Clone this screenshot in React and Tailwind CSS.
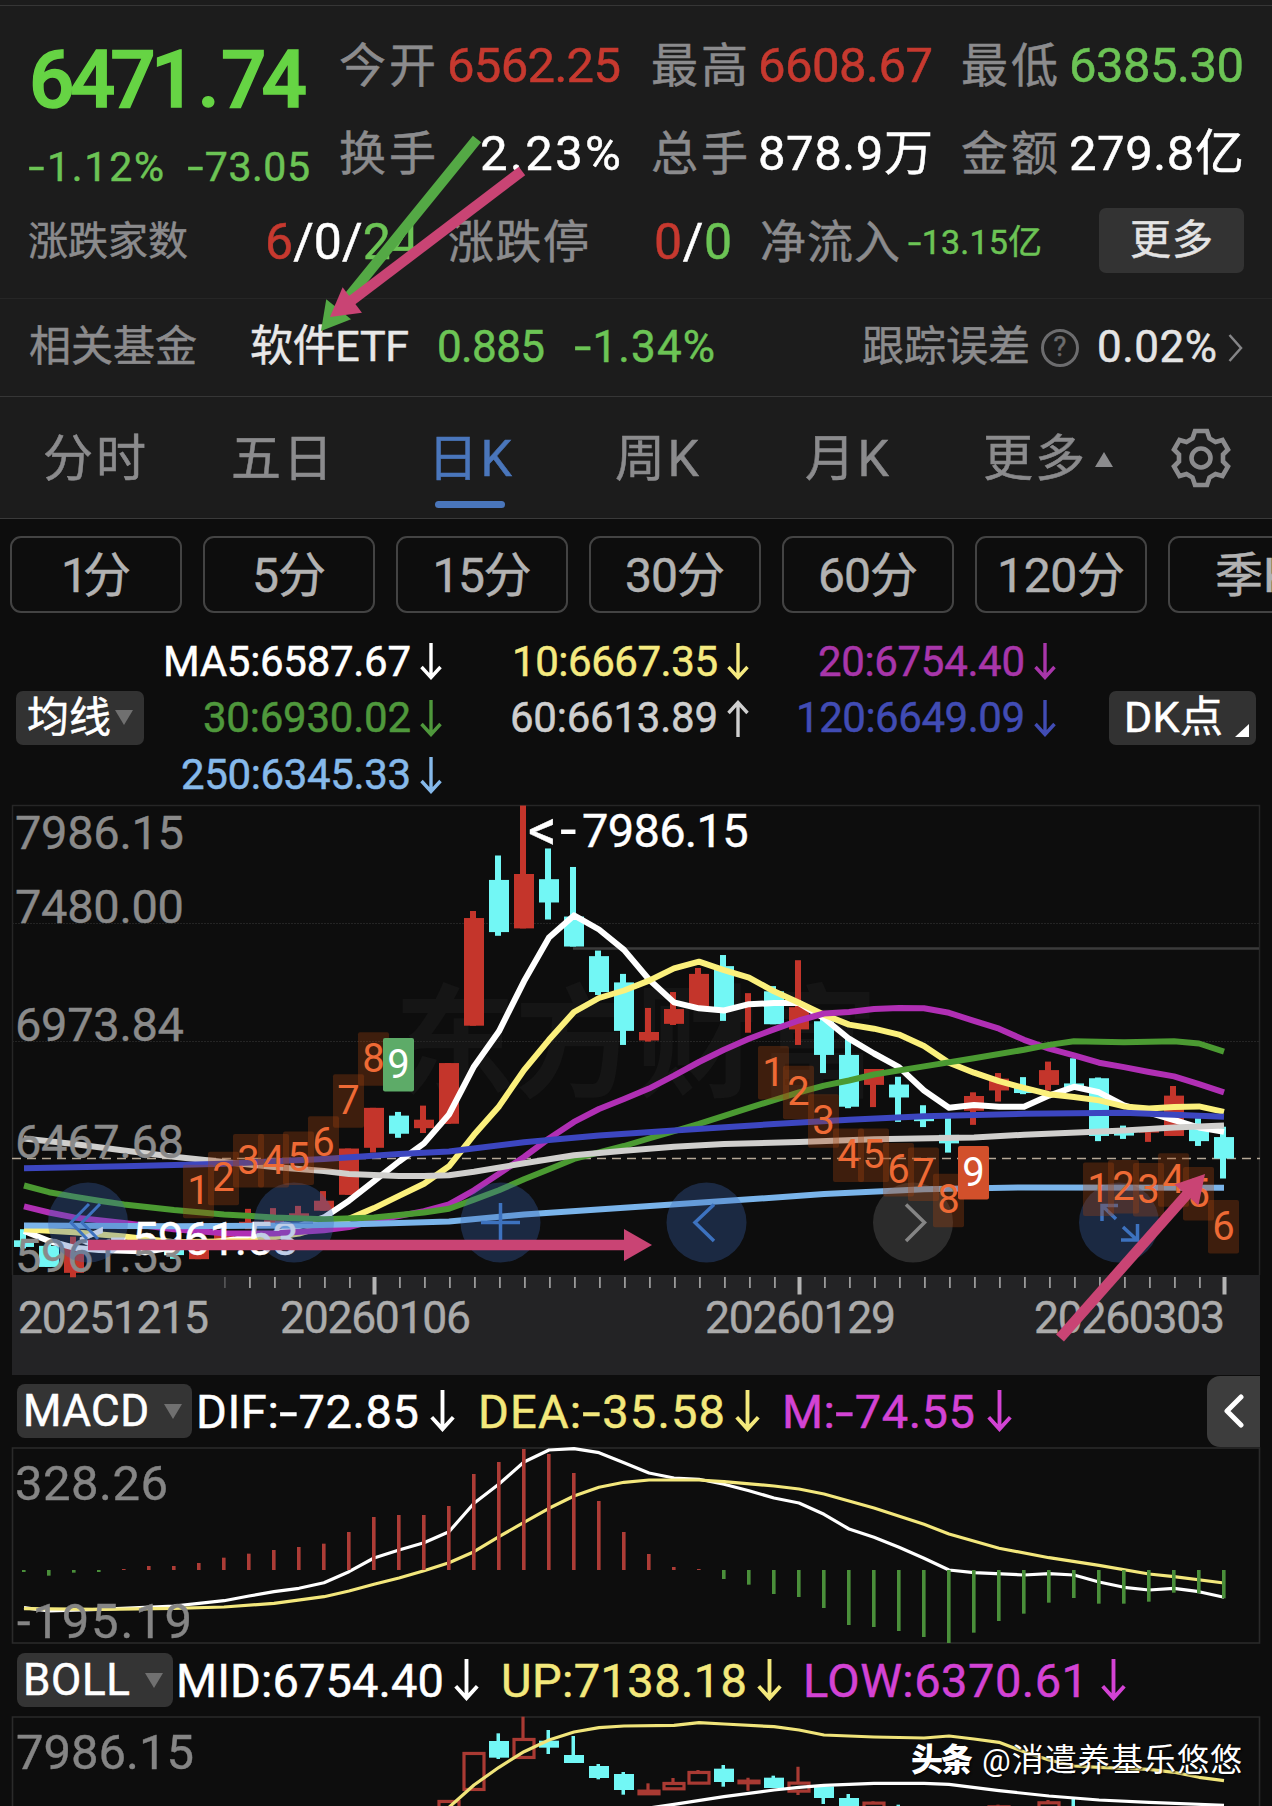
import React, { useLayoutEffect, useRef } from "react";

const FONT = "font-['Roboto','Noto_Sans_CJK_SC',sans-serif]";

// Spreads a single line of text evenly over the width of its box.
function Fit({ children, className = "" }) {
  const box = useRef(null);
  const inner = useRef(null);
  useLayoutEffect(() => {
    const el = inner.current;
    el.style.letterSpacing = "0px";
    const n = el.textContent.length;
    const free = box.current.clientWidth - el.getBoundingClientRect().width;
    if (n > 1) el.style.letterSpacing = free / (n - 1) + "px";
  });
  return (
    <span ref={box} className={"block shrink-0 whitespace-nowrap leading-none " + className}>
      <span ref={inner} className="inline-block">{children}</span>
    </span>
  );
}

// Minus sign, a little wider than the font's hyphen.
function Dash() {
  return <span className="mx-[0.06em] inline-block origin-center scale-x-140">-</span>;
}

const CYAN = "#72f7f5";
const RED = "#c4352b";
const GRID = "#262626";

const xi = (i) => 24 + 25 * i;
const kY = (v) => 800 + v * 0.37;
const mY = (v) => 1370 + v / 3;

const pts = (arr, y) => arr.map(([i, v]) => `${xi(i)},${y(v).toFixed(1)}`).join(" ");

// index, up?, high, body top, body bottom, low
const candles = [
  [0, 0, 1160, 1190, 1208, 1212], [1, 0, 1200, 1205, 1262, 1262], [2, 1, 1180, 1210, 1278, 1290],
  [6, 0, 1195, 1205, 1230, 1240], [7, 1, 1205, 1210, 1241, 1241], [8, 1, 1160, 1168, 1198, 1200],
  [9, 1, 1105, 1140, 1152, 1160], [10, 1, 1103, 1136, 1150, 1155], [11, 1, 1097, 1117, 1132, 1135],
  [12, 1, 1057, 1083, 1110, 1110], [13, 1, 942, 942, 1067, 1067], [14, 1, 832, 832, 940, 953],
  [15, 0, 843, 853, 902, 913], [16, 1, 826, 864, 887, 900], [17, 1, 711, 711, 875, 875],
  [18, 1, 300, 319, 610, 610], [19, 0, 150, 216, 357, 367], [20, 1, 15, 200, 347, 347],
  [21, 0, 131, 214, 277, 323], [22, 0, 181, 315, 396, 396], [23, 0, 407, 422, 519, 527],
  [24, 0, 470, 493, 624, 662], [25, 1, 562, 627, 650, 653], [26, 1, 519, 565, 605, 608],
  [27, 1, 454, 470, 558, 558], [28, 0, 419, 449, 570, 597], [29, 1, 522, 552, 556, 629],
  [30, 0, 503, 517, 606, 606], [31, 1, 433, 560, 620, 662], [32, 0, 590, 598, 689, 738],
  [33, 0, 645, 689, 829, 833], [34, 1, 727, 727, 770, 830], [35, 0, 748, 769, 804, 870],
  [36, 0, 825, 861, 868, 884], [37, 0, 860, 905, 928, 953], [38, 1, 790, 800, 840, 878],
  [39, 1, 738, 753, 785, 815], [40, 0, 749, 778, 792, 795], [41, 1, 707, 730, 770, 785],
  [42, 0, 698, 766, 776, 778], [43, 0, 750, 752, 908, 922], [44, 0, 880, 893, 907, 916],
  [45, 1, 890, 892, 899, 924], [46, 1, 773, 799, 908, 908], [47, 0, 860, 880, 922, 935],
  [48, 0, 883, 911, 969, 1023],
];

const maLines = [
  ["#ffffff", [[0, 1165], [1, 1192], [2, 1210], [3, 1216], [5, 1220], [6, 1208], [8, 1192], [10, 1172], [11, 1152], [12, 1128], [13, 1083], [14, 1030], [15, 977], [16, 928], [17, 850], [18, 720], [19, 625], [20, 490], [21, 372], [22, 312], [23, 350], [24, 405], [25, 485], [26, 547], [27, 563], [28, 569], [29, 552], [30, 549], [31, 549], [32, 590], [33, 645], [34, 685], [35, 722], [36, 785], [37, 832], [38, 824], [39, 829], [40, 829], [41, 799], [42, 775], [43, 790], [44, 825], [45, 845], [46, 865], [47, 885], [48, 897]]],
  ["#fbf07c", [[0, 1160], [2, 1168], [4, 1180], [6, 1195], [9, 1192], [11, 1172], [12, 1152], [13, 1132], [14, 1103], [15, 1070], [16, 1037], [17, 990], [18, 905], [19, 828], [20, 730], [21, 648], [22, 573], [23, 535], [24, 515], [25, 488], [26, 455], [27, 437], [28, 460], [29, 480], [30, 517], [31, 548], [32, 580], [33, 607], [34, 618], [35, 634], [36, 665], [37, 710], [38, 737], [39, 760], [40, 778], [41, 795], [42, 803], [43, 812], [44, 828], [45, 834], [46, 830], [47, 828], [48, 843]]],
  ["#b02fb4", [[0, 1098], [1, 1115], [2, 1128], [4, 1143], [6, 1160], [8, 1171], [10, 1172], [12, 1163], [13, 1154], [14, 1137], [16, 1111], [17, 1093], [18, 1055], [19, 1010], [20, 965], [21, 915], [22, 870], [23, 835], [24, 808], [25, 780], [26, 745], [27, 708], [28, 675], [29, 645], [30, 620], [31, 596], [32, 577], [33, 573], [34, 565], [35, 562], [36, 563], [37, 575], [38, 597], [39, 618], [40, 648], [41, 672], [42, 690], [43, 710], [44, 722], [45, 735], [46, 747], [47, 768], [48, 790]]],
  ["#4b9a32", [[0, 1042], [1, 1060], [2, 1072], [3, 1083], [4, 1093], [6, 1108], [8, 1120], [10, 1128], [12, 1133], [14, 1128], [16, 1115], [17, 1105], [18, 1080], [19, 1055], [20, 1025], [21, 998], [22, 970], [24, 935], [25, 915], [27, 875], [29, 832], [31, 790], [32, 772], [33, 758], [34, 742], [36, 720], [38, 698], [40, 675], [41, 662], [42, 652], [44, 655], [46, 652], [47, 658], [48, 680]]],
  ["#d0cfcd", [[0, 915], [2, 930], [4, 947], [6, 964], [8, 978], [10, 992], [12, 1003], [13, 1011], [15, 1016], [16, 1016], [17, 1014], [18, 1005], [20, 982], [22, 960], [24, 948], [26, 937], [28, 930], [31, 924], [34, 917], [38, 912], [40, 905], [44, 893], [46, 885], [48, 880]]],
  ["#3c46c0", [[0, 995], [4, 990], [8, 983], [12, 970], [15, 957], [17, 950], [20, 925], [23, 907], [26, 893], [30, 876], [33, 864], [36, 855], [40, 848], [44, 845], [48, 856]]],
  ["#7ab4ea", [[0, 1150], [6, 1152], [11, 1150], [14, 1145], [17, 1139], [20, 1120], [24, 1102], [28, 1084], [32, 1065], [36, 1052], [40, 1047], [48, 1048]]],
];

// index, digit, baseline, optional solid fill
const badges = [
  [7, 1, 1093], [8, 2, 1058], [9, 3, 1010], [10, 4, 1010], [11, 5, 1003], [12, 6, 962], [13, 7, 848], [14, 8, 735], [15, 9, 750, "#5dab68"],
  [30, 1, 772], [31, 2, 825], [32, 3, 902], [33, 4, 995], [34, 5, 995], [35, 6, 1034], [36, 7, 1046], [37, 8, 1117], [38, 9, 1042, "#d2502b"],
  [43, 1, 1087], [44, 2, 1080], [45, 3, 1088], [46, 4, 1062], [47, 5, 1099], [48, 6, 1188],
];

const macdBars = [606, 617, 608, 606, 597, 588, 588, 579, 563, 551, 540, 531, 521, 486, 441, 435, 435, 408, 312, 276, 237, 252, 309, 393, 486, 552, 591, 597, 627, 644, 672, 681, 714, 765, 771, 783, 801, 819, 788, 753, 731, 698, 684, 701, 701, 695, 668, 670, 685];
const dif = [[0, 713], [1, 723], [3, 718], [6, 708], [7, 700], [8, 692], [9, 678], [10, 665], [11, 655], [12, 638], [13, 605], [14, 564], [15, 540], [16, 518], [17, 485], [18, 400], [19, 342], [20, 276], [21, 240], [22, 236], [23, 248], [24, 278], [25, 309], [26, 324], [27, 328], [28, 343], [29, 362], [30, 384], [31, 399], [32, 433], [33, 477], [34, 502], [35, 532], [36, 565], [37, 600], [38, 608], [40, 615], [41, 611], [42, 615], [43, 636], [44, 652], [45, 660], [46, 655], [47, 665], [48, 682]];
const dea = [[0, 716], [3, 718], [6, 715], [8, 711], [10, 700], [12, 680], [13, 663], [14, 643], [15, 624], [16, 602], [17, 578], [18, 545], [19, 500], [20, 457], [21, 415], [22, 378], [23, 352], [24, 337], [25, 330], [27, 330], [28, 335], [30, 348], [31, 357], [32, 372], [34, 414], [36, 463], [37, 492], [39, 535], [41, 563], [43, 586], [45, 612], [46, 620], [48, 639]];

const bollCandles = [
  [17, 1, 1290, 1292, 1340, 1340], [18, 1, 1146, 1148, 1259, 1259], [19, 0, 1090, 1113, 1163, 1167], [20, 1, 1040, 1106, 1163, 1163],
  [21, 0, 1080, 1112, 1133, 1152], [22, 0, 1098, 1155, 1179, 1179], [23, 0, 1182, 1188, 1224, 1228], [24, 0, 1206, 1212, 1260, 1274],
  [25, 1, 1240, 1261, 1272, 1272], [26, 1, 1224, 1238, 1257, 1257], [27, 1, 1200, 1205, 1240, 1240], [28, 0, 1185, 1196, 1236, 1250],
  [29, 1, 1223, 1231, 1239, 1262], [30, 0, 1217, 1223, 1254, 1254], [31, 1, 1190, 1237, 1264, 1275], [32, 0, 1245, 1249, 1284, 1302],
  [33, 0, 1272, 1284, 1320, 1320], [34, 1, 1294, 1297, 1320, 1320], [35, 0, 1304, 1315, 1320, 1320], [39, 1, 1304, 1308, 1320, 1320],
  [41, 1, 1290, 1296, 1320, 1320], [42, 0, 1285, 1315, 1320, 1320],
];
const bollUp = [[17, 1312], [18, 1245], [19, 1192], [20, 1145], [21, 1110], [22, 1086], [23, 1073], [24, 1068], [26, 1066], [27, 1058], [28, 1062], [30, 1070], [31, 1080], [32, 1095], [34, 1101], [36, 1104], [37, 1098], [38, 1107], [39, 1117], [40, 1145], [41, 1170], [42, 1188], [43, 1192], [45, 1198], [46, 1207], [47, 1222], [48, 1232]];
const bollMid = [[25, 1314], [26, 1303], [28, 1280], [30, 1260], [31, 1252], [32, 1246], [34, 1240], [36, 1240], [37, 1243], [39, 1262], [41, 1278], [43, 1290], [45, 1297], [48, 1306]];

function Label({ x, y, w, size, fill, children }) {
  return (
    <text x={x} y={y} fontSize={size} fill={fill} stroke={fill} strokeWidth="0.4" textLength={w} lengthAdjust="spacing">{children}</text>
  );
}

// Price extreme with its "<-" leader.
function Extreme({ x, y, value }) {
  return (
    <text x={x} y={y} fontSize="47" fill="#fff" stroke="#fff" strokeWidth="0.4">
      <tspan x={x} y={y + 3} fontSize="57">{"<"}</tspan>
      <tspan x={x + 32} y={y + 3} fontSize="60" strokeWidth="0">-</tspan>
      <tspan x={x + 54} y={y} letterSpacing="-0.7">{value}</tspan>
    </text>
  );
}

// A straight arrow with a filled head, from (x1,y1) to its tip (x2,y2).
function Pointer({ x1, y1, x2, y2, color }) {
  const d = Math.hypot(x2 - x1, y2 - y1);
  const ux = (x2 - x1) / d, uy = (y2 - y1) / d;
  const bx = x2 - ux * 28, by = y2 - uy * 28;
  return (
    <g fill={color} stroke="none">
      <line x1={x1} y1={y1} x2={bx + ux} y2={by + uy} stroke={color} strokeWidth="10.5" />
      <polygon points={`${x2},${y2} ${bx - uy * 16},${by + ux * 16} ${bx + uy * 16},${by - ux * 16}`} />
    </g>
  );
}

function KChart() {
  return (
    <svg className={"block shrink-0 " + FONT} width="1272" height="575" viewBox="0 800 1272 575">
      <rect x="12" y="1275" width="1248" height="100" fill="#232325" />
      <text x="394" y="1087" fontSize="122" fontWeight="700" fill="#151515" textLength="484">东方财富</text>
      <path d="M12.5 1275V805.5H1259.5V1275" fill="none" stroke={GRID} strokeWidth="1.5" />
      <path d="M12 923.5H1259M12 1041.5H1259" stroke="#242424" strokeWidth="1.2" strokeDasharray="2 1" />
      <line x1="573" x2="1259" y1="948.5" y2="948.5" stroke="#3b3b3b" strokeWidth="2.5" />
      <line x1="12" x2="1260" y1="1158.5" y2="1158.5" stroke="#b5a896" strokeWidth="1.3" strokeDasharray="9 6" />

      {candles.map(([i, up, h, t, b, l]) => (
        <g key={i} fill={up ? RED : CYAN}>
          <rect x={xi(i) - 4} y={kY(h)} width="6" height={(l - h) * 0.37} />
          {i !== 29 && <rect x={xi(i) - 10} y={kY(t)} width="20" height={(b - t) * 0.37} />}
        </g>
      ))}
      {maLines.map(([c, d]) => (
        <polyline key={c} points={pts(d, kY)} fill="none" stroke={c} strokeWidth="6" strokeLinejoin="round" />
      ))}

      <Extreme x={528} y={847} value="7986.15" />
      <Extreme x={78} y={1255} value="5961.53" />

      {[["7986.15", 849], ["7480.00", 923], ["6973.84", 1041], ["6467.68", 1158], ["5961.53", 1272]].map(([t, y]) => (
        <Label key={t} x={15} y={y} w={169} size={47} fill="#8a8a8a">{t}</Label>
      ))}

      {[88, 294, 500.5, 706.5, 913, 1119].map((x, k) => (
        <circle key={x} cx={x} cy="1222.5" r="40" fill={k === 4 ? "#8a8a8a" : "#3a68b4"} opacity={k === 4 ? 0.25 : 0.32} />
      ))}
      <g fill="none" stroke="#3d72bf" strokeWidth="3">
        <path d="M89 1204L71 1222.5L87 1239M100 1204L82 1222.5L98 1239" />
        <path d="M275 1222.5H313" strokeOpacity=".5" />
        <path d="M481 1222.5H520M500.5 1203V1241" strokeWidth="3.5" />
        <path d="M714 1204.5L695 1222.5L714 1241" strokeWidth="3.5" />
        <path d="M906 1204.5L924.5 1222.5L906 1241" stroke="#858585" strokeWidth="3.5" />
        <path d="M1118 1205.5H1102V1221M1102 1205.5L1116 1219M1121 1240H1137.500V1224M1137 1240L1123 1227" strokeWidth="3.5" />
      </g>

      {badges.map(([i, n, base, solid]) => (
        <g key={i}>
          <rect x={xi(i) - 16} y={kY(base - 107)} width="31" height="53.500" rx="2" fill={solid || "#a8430f"} opacity={solid ? 1 : 0.32} />
          <text x={xi(i) - 0.5} y={kY(base)} fontSize="40" textAnchor="middle" fill={solid ? "#fff" : "#ee6a35"}>{n}</text>
        </g>
      ))}

      {Array.from({ length: 41 }, (_, k) => k + 8).map((i) =>
        i === 14 || i === 31 || i === 48
          ? <rect key={i} x={xi(i) - 1.5} y="1277" width="4" height="17.500" fill="#b4b4b4" />
          : <rect key={i} x={xi(i)} y="1277" width="1.800" height="11" fill="#9a9a9a" opacity={i === 8 ? 0.4 : 1} />
      )}
      {[["20251215", 18], ["20260106", 280], ["20260129", 705], ["20260303", 1034]].map(([t, x]) => (
        <Label key={t} x={x} y={1333} w={191} size={44.5} fill="#ababab">{t}</Label>
      ))}

      <Pointer x1={88} y1={1245} x2={652} y2={1245} color="#c94474" />
      <Pointer x1={1060} y1={1338} x2={1205} y2={1174} color="#c94474" />
    </svg>
  );
}

function MacdChart() {
  return (
    <svg className={"block shrink-0 " + FONT} width="1272" height="197" viewBox="0 1447 1272 197">
      <rect x="12.500" y="1448" width="1247" height="195" fill="none" stroke="#2a2a2a" strokeWidth="1.600" />
      <polyline points={pts(dif, mY)} fill="none" stroke="#fff" strokeWidth="3.200" strokeLinejoin="round" />
      <polyline points={pts(dea, mY)} fill="none" stroke="#f3e77c" strokeWidth="3.200" strokeLinejoin="round" />
      {macdBars.map((v, i) => (
        <rect key={i} x={xi(i) - 2} y={Math.min(mY(v), 1570)} width="3.600" height={Math.abs(mY(v) - 1570)} fill={v < 600 ? "#ad3c36" : "#4a8f3a"} />
      ))}
      <Label x={15} y={1500} w={153} size={49} fill="#858585">328.26</Label>
      <Label x={17} y={1638} w={175} size={49} fill="#858585">-195.19</Label>
    </svg>
  );
}

function BollChart() {
  return (
    <svg className={"block shrink-0 " + FONT} width="1272" height="90" viewBox="0 1716 1272 90">
      <path d="M12.500 1806V1717H1259.500V1806" fill="none" stroke="#2a2a2a" strokeWidth="1.600" />
      {bollCandles.map(([i, up, h, t, b, l]) =>
        up ? (
          <g key={i} stroke="#a93a33" strokeWidth="3.200" fill="none">
            <path d={`M${xi(i) - 1} ${mY(h)}V${mY(t)}M${xi(i) - 1} ${mY(b)}V${mY(l)}`} />
            <rect x={xi(i) - 10} y={mY(t) + 0.8} width="20" height={Math.max(1, (b - t) / 3 - 1)} />
          </g>
        ) : (
          <g key={i} fill={CYAN}>
            <rect x={xi(i) - 2.5} y={mY(h)} width="3.500" height={(l - h) / 3} />
            <rect x={xi(i) - 10} y={mY(t)} width="20" height={(b - t) / 3} />
          </g>
        )
      )}
      <polyline points={pts(bollUp, mY)} fill="none" stroke="#f0e47a" strokeWidth="3.200" strokeLinejoin="round" />
      <polyline points={pts(bollMid, mY)} fill="none" stroke="#fff" strokeWidth="3.200" strokeLinejoin="round" />
      <Label x={16} y={1769} w={178} size={49} fill="#858585">7986.15</Label>
    </svg>
  );
}

function Arrow({ up, className = "w-[22px] h-[37px]" }) {
  return (
    <svg className={"shrink-0 " + className} viewBox="0 0 22 37" fill="none" stroke="currentColor" strokeWidth="3.400">
      {up ? <path d="M11 37V2.500M1.500 13L11 2.500L20.500 13" /> : <path d="M11 0V34.500M1.500 24L11 34.500L20.500 24" />}
    </svg>
  );
}

function Tri({ className = "" }) {
  return <svg className={"shrink-0 w-[18px] h-[15px] " + className} viewBox="0 0 18 15"><path d="M0 0H18L9 15Z" fill="currentColor" /></svg>;
}

function Ma({ children, w, color, up }) {
  return (
    <div className={"flex items-center justify-end gap-[9px] " + color}>
      <Fit className={"text-[42px] " + w}>{children}</Fit>
      <Arrow up={up} />
    </div>
  );
}

const periods = [["1分", "w-[70px]"], ["5分", "w-[74px]"], ["15分", "w-[99px]"], ["30分", "w-[100px]"], ["60分", "w-[100px]"], ["120分", "w-[128px]"], ["季K", "w-[78px]"]];

export default function App() {
  return (
    <div className={"relative flex h-[1806px] w-[1272px] flex-col overflow-hidden bg-[#0d0d0d] text-[#8b8b8d] [-webkit-text-stroke:0.5px] " + FONT}>
      <header className="relative shrink-0 bg-[#1c1c1c]">
        <div className="h-[6px] border-b border-[#363636]" />
        <div className="h-[293px] border-b border-[#262626] pt-[14px]">
          <div className="flex h-44">
            <div className="ml-[29px] w-[310px]">
              <Fit className="mt-[20px] w-[278px] text-[80px] font-medium text-[#66d444] [-webkit-text-stroke:1.5px]">6471<span className="mx-[6px]">.</span>74</Fit>
              <div className="mt-[27px] flex text-[41px] text-[#6cc455]">
                <Fit className="w-[135px]"><Dash />1.12%</Fit>
                <Fit className="ml-[24px] w-[122px]"><Dash />73.05</Fit>
              </div>
            </div>
            <div className="pt-px text-[49px]">
              <div className="flex h-[88px] items-center">
                <Fit className="w-[97px] text-[47px]">今开</Fit>
                <Fit className="ml-[11px] w-[174px] text-[#c7392f]">6562.25</Fit>
                <Fit className="ml-[30px] w-[97px] text-[47px]">最高</Fit>
                <Fit className="ml-[10px] w-[175px] text-[#c7392f]">6608.67</Fit>
                <Fit className="ml-[28px] w-[97px] text-[47px]">最低</Fit>
                <Fit className="ml-[11px] w-[175px] text-[#6cc455]">6385.30</Fit>
              </div>
              <div className="flex h-[88px] items-center text-white">
                <Fit className="w-[97px] text-[47px] text-[#8b8b8d]">换手</Fit>
                <Fit className="ml-[44px] w-[141px]">2.23%</Fit>
                <Fit className="ml-[30px] w-[97px] text-[47px] text-[#8b8b8d]">总手</Fit>
                <Fit className="ml-[10px] w-[175px]">878.9万</Fit>
                <Fit className="ml-[28px] w-[97px] text-[47px] text-[#8b8b8d]">金额</Fit>
                <Fit className="ml-[11px] w-[175px]">279.8亿</Fit>
              </div>
            </div>
          </div>
          <div className="flex h-[88px] items-center text-[50px]">
            <Fit className="ml-[28px] mt-[4px] w-[160px] text-[40px]">涨跌家数</Fit>
            <Fit className="ml-[77px] mt-[3px] w-[154px] text-white">
              <span className="text-[#c7392f]">6</span>/0/<span className="text-[#6cc455]">24</span>
            </Fit>
            <Fit className="ml-[29px] mt-[3px] w-[141px] text-[46px]">涨跌停</Fit>
            <Fit className="ml-[65px] mt-[3px] w-[78px] text-white">
              <span className="text-[#c7392f]">0</span>/<span className="text-[#6cc455]">0</span>
            </Fit>
            <Fit className="ml-[28px] mt-[3px] w-[140px] text-[46px]">净流入</Fit>
            <Fit className="ml-[8px] mt-[3px] w-[134px] text-[34px] text-[#6cc455]"><Dash />13.15亿</Fit>
            <div className="ml-[57px] flex h-[65px] w-[145px] items-center justify-center rounded-[7px] bg-[#333333] text-[#e4e4e4]">
              <Fit className="w-[83px] text-[41px]">更多</Fit>
            </div>
          </div>
        </div>
        <div className="flex h-[98px] items-center border-b border-[#363636] pb-[2px] text-[44px]">
          <Fit className="ml-[29px] w-[168px] text-[42px]">相关基金</Fit>
          <Fit className="ml-[53px] w-[159px] text-[43px] text-[#e8e8e8]">软件ETF</Fit>
          <Fit className="ml-[28px] w-[108px] text-[#6cc455]">0.885</Fit>
          <Fit className="ml-[29px] w-[141px] text-[#6cc455]"><Dash />1.34%</Fit>
          <Fit className="ml-[147px] w-[168px] text-[42px]">跟踪误差</Fit>
          <div className="ml-[11px] mt-[2px] flex h-[38px] w-[38px] items-center justify-center rounded-full border-[3px] border-[#6c6c6e] text-[27px] leading-none text-[#6c6c6e]">?</div>
          <Fit className="ml-[18px] w-[120px] text-[#e4e4e4]">0.02%</Fit>
          <svg className="ml-[11px] mt-[3px] h-[28px] w-[15px]" viewBox="0 0 15 28" fill="none" stroke="#858587" strokeWidth="2.500"><path d="M1.500 1L13 14L1.500 27" /></svg>
        </div>
        <div className="flex h-[122px] items-center border-b border-[#3a3a3a] pt-[3px] text-[50px]">
          <Fit className="ml-[43px] w-[103px]">分时</Fit>
          <Fit className="ml-[85px] w-[102px]">五日</Fit>
          <div className="relative ml-[95px] text-[#4a76bb]">
            <Fit className="w-[84px]">日K</Fit>
            <div className="absolute left-[7px] top-[67px] h-[7px] w-[70px] rounded-full bg-[#4a76bb]" />
          </div>
          <Fit className="ml-[103px] w-[84px]">周K</Fit>
          <Fit className="ml-[106px] w-[84px]">月K</Fit>
          <Fit className="ml-[94px] w-[102px]">更多</Fit>
          <Tri className="ml-[10px] rotate-180 text-[#8b8b8d]" />
          <svg className="mb-[3px] ml-[57px] h-[62px] w-[62px]" viewBox="-31 -31 62 62" fill="none" stroke="currentColor" strokeWidth="4.600" strokeLinejoin="miter">
            <path d="M-6 -27H6L8.500 -19.500L14.500 -16L21.500 -18L27 -8.500L22 -3.500V3.500L27 8.500L21.500 18L14.500 16L8.500 19.500L6 27H-6L-8.500 19.500L-14.500 16L-21.500 18L-27 8.500L-22 3.500V-3.500L-27 -8.500L-21.500 -18L-14.500 -16L-8.500 -19.500Z" />
            <circle r="9.500" />
          </svg>
        </div>
        <svg className="absolute left-[300px] top-[120px]" width="250" height="230" viewBox="300 120 250 230">
          <Pointer x1={477} y1={139} x2={321} y2={331} color="#54a945" />
          <Pointer x1={522} y1={171} x2={330} y2={317} color="#c94474" />
        </svg>
      </header>

      <div className="flex shrink-0 gap-[21px] pl-[10px] pt-[17px] text-[48px] text-[#b2b2b2]">
        {periods.map(([t, w]) => (
          <div key={t} className="flex h-[77px] w-[172px] shrink-0 items-center justify-center rounded-[11px] border-2 border-[#434343] pt-[2px]">
            <Fit className={w}>{t}</Fit>
          </div>
        ))}
      </div>

      <div className="flex h-[187px] shrink-0 items-center pl-[16px] pt-[24px]">
        <div className="mb-[2px] flex h-[54px] w-[128px] items-center rounded-[7px] bg-[#323232] pl-[11px] text-white">
          <Fit className="w-[84px] text-[42px]">均线</Fit>
          <Tri className="ml-[4px] text-[#707070]" />
        </div>
        <div className="grid h-[170px] grid-cols-[298px_307px_307px]">
          <Ma w="w-[248px]" color="text-white">MA5:6587.67</Ma>
          <Ma w="w-[206px]" color="text-[#f5ea80]">10:6667.35</Ma>
          <Ma w="w-[207px]" color="text-[#a836aa]">20:6754.40</Ma>
          <Ma w="w-[208px]" color="text-[#4f983c]">30:6930.02</Ma>
          <Ma w="w-[208px]" color="text-[#cfcfcf]" up>60:6613.89</Ma>
          <Ma w="w-[229px]" color="text-[#414cb4]">120:6649.09</Ma>
          <Ma w="w-[230px]" color="text-[#86b9ea]">250:6345.33</Ma>
        </div>
        <div className="relative mb-[2px] ml-[53px] flex h-[54px] w-[147px] items-center rounded-[7px] bg-[#323232] pl-[15px] text-white">
          <Fit className="w-[99px] text-[43px]">DK点</Fit>
          <svg className="absolute bottom-[8px] right-[7px] h-[13px] w-[14px]" viewBox="0 0 14 13"><path d="M14 0V13H0Z" fill="#fff" /></svg>
        </div>
      </div>

      <KChart />

      <div className="flex h-[72px] shrink-0 items-center pl-[17px] text-[47px]">
        <div className="flex h-[54px] w-[175px] items-center rounded-[8px] bg-[#343434] pl-[6px] text-white">
          <Fit className="w-[126px] text-[44px]">MACD</Fit>
          <Tri className="ml-[15px] text-[#707070]" />
        </div>
        <Fit className="ml-[4px] w-[223px] text-white">DIF:<Dash />72.85</Fit>
        <Arrow className="ml-[11px] h-[42px] w-[25px] text-white" />
        <Fit className="ml-[23px] w-[247px] text-[#f3e87c]">DEA:<Dash />35.58</Fit>
        <Arrow className="ml-[10px] h-[42px] w-[25px] text-[#f3e87c]" />
        <Fit className="ml-[22px] w-[193px] text-[#d343d4]">M:<Dash />74.55</Fit>
        <Arrow className="ml-[12px] h-[42px] w-[25px] text-[#d343d4]" />
        <div className="ml-auto mr-[12px] flex h-[71px] w-[53px] items-center justify-center rounded-l-[13px] bg-[#3d3d3d]">
          <svg className="h-[34px] w-[20px]" viewBox="0 0 20 34" fill="none" stroke="#fff" strokeWidth="5" strokeLinecap="round" strokeLinejoin="round"><path d="M17 3L3 17L17 31" /></svg>
        </div>
      </div>
      <MacdChart />

      <div className="flex h-[72px] shrink-0 items-center pl-[17px] text-[47px]">
        <div className="flex h-[54px] w-[156px] items-center rounded-[8px] bg-[#343434] pl-[6px] text-white">
          <Fit className="w-[107px] text-[44px]">BOLL</Fit>
          <Tri className="ml-[15px] text-[#707070]" />
        </div>
        <Fit className="ml-[3px] w-[268px] text-white">MID:6754.40</Fit>
        <Arrow className="ml-[10px] h-[42px] w-[25px] text-white" />
        <Fit className="ml-[22px] w-[246px] text-[#f3e87c]">UP:7138.18</Fit>
        <Arrow className="ml-[10px] h-[42px] w-[25px] text-[#f3e87c]" />
        <Fit className="ml-[21px] w-[285px] text-[#d343d4]">LOW:6370.61</Fit>
        <Arrow className="ml-[13px] h-[42px] w-[25px] text-[#d343d4]" />
      </div>
      <BollChart />

      <div className="absolute bottom-[30px] right-[30px] flex items-center text-[32px] text-white [text-shadow:1px_1px_2px_#000] [-webkit-text-stroke:0]">
        <Fit className="w-[62px] font-black">头条</Fit>
        <Fit className="ml-[9px] w-[260px]">@消遣养基乐悠悠</Fit>
      </div>
    </div>
  );
}
